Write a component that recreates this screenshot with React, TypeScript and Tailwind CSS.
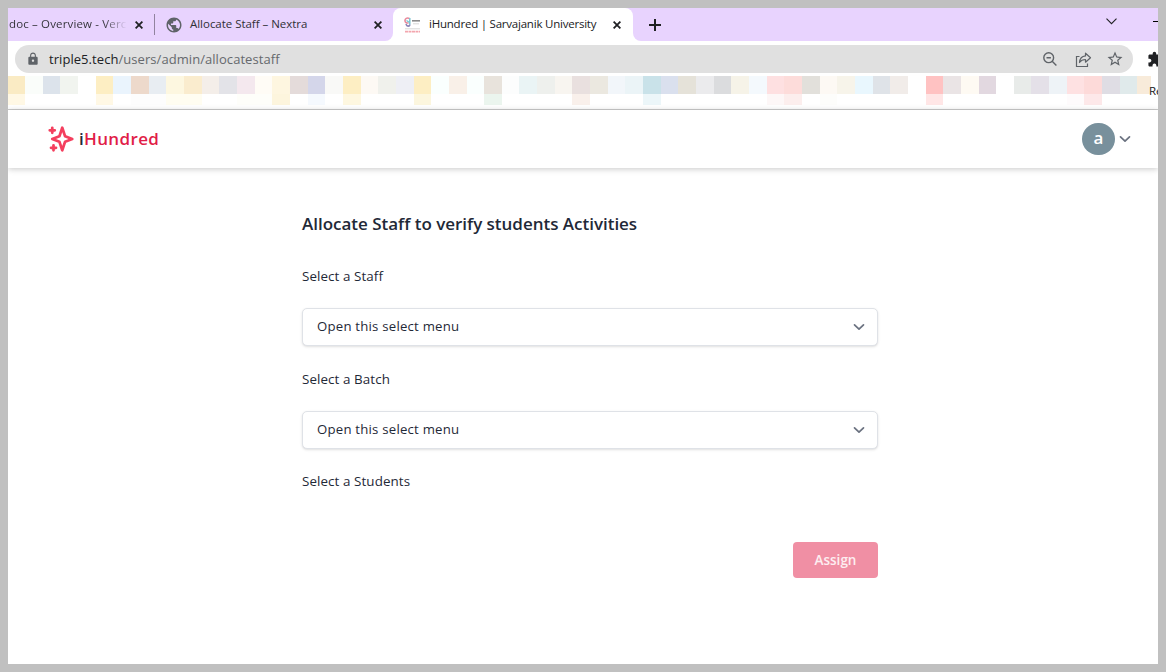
import React from "react";
import { MdLock, MdPublic, MdStarBorder, MdExtension } from "react-icons/md";

// Bookmark tiles: upper colour, optional lower colour
const tiles: [string, string?][] = [
  ["#faebc4", "#fff8e5"], ["#fafdfa"], ["#dce3eb"], ["#f1f4ef"], ["#ffffff"],
  ["#fdeec3", "#fff8e5"], ["#eaf4fd"], ["#edd9cb", "#fdfdfd"], ["#e8edf2", "#fdfdfd"], ["#fdf7e0", "#fffdf1"],
  ["#faecce", "#fffdf1"], ["#f4eee9"], ["#e3e3e8"], ["#f4e8ee", "#fefefa"], ["#fffcf6", "#fefefa"],
  ["#fef6e0", "#fdf5dd"], ["#e4dbda"], ["#d4d6ea", "#f5f9fe"], ["#f9f9f7"], ["#fdeec3", "#fef7e0"],
  ["#fdf9f4"], ["#f0f1ec"], ["#eeeff5"], ["#fdeec3", "#fcf6de"], ["#fafffe"],
  ["#f9f0e8"], ["#fafffe"], ["#e8e3dc", "#ebf5ee"], ["#fcfdfd"], ["#eaf4f5"],
  ["#eef0ed"], ["#f8f5f0"], ["#e9e0df", "#f9f0eb"], ["#ebe8e0"], ["#f2f6fa"],
  ["#ebf4f7"], ["#c9e2e9", "#ecf6f9"], ["#dae0ee"], ["#e5e2d9"], ["#ebebed"],
  ["#dbdcde"], ["#f6f3e8"], ["#f4f9fd"], ["#fee0e1", "#fdf7f7"], ["#fddcda", "#fceeed"],
  ["#e2e0db"], ["#fdf9f4", "#fdfdfb"], ["#f7f4ea"], ["#e9f7fe"], ["#dfe3e8"],
  ["#f1ece9"], ["#ffffff"], ["#ffc2c2", "#ffe6e6"], ["#eae4e5"], ["#fefaf3"],
  ["#e2d8e0"], ["#ffffff"], ["#e8ebe9"], ["#e4e0e8"], ["#eef3f7"],
  ["#fee1e2", "#fefbfc"], ["#fddad9", "#fde8e9"], ["#dfdde4"], ["#e0eaeb"], ["#f8ebda"],
];

const edge = (i: number) => Math.min(Math.floor(i * 17.655), 1143);

function Close() {
  return (
    <svg className="size-2 shrink-0" viewBox="0 0 8 8" fill="none" stroke="#202124" strokeWidth="1.8">
      <path d="M.6.6l6.8 6.8M7.4.6L.6 7.4" />
    </svg>
  );
}

function Chevron({ className }: { className: string }) {
  return (
    <svg className={className} viewBox="0 0 12 8" fill="none" stroke="#6b7280" strokeWidth="1.7" strokeLinecap="round" strokeLinejoin="round">
      <path d="M1.5 1.8L6 6.2l4.500-4.400" />
    </svg>
  );
}

function SiteIcon() {
  return (
    <svg className="h-4 w-[17px] shrink-0" viewBox="0 0 17 16" fill="none">
      <path d="M5.500 1.500C3 .2.800 1.500 1 4c.2 1.800 2 2.400 3.500 1.800" stroke="#e88a9c" strokeWidth="1.600" />
      <path d="M2.500 3.500l3 2M5.800 1v6.500" stroke="#7cc5d2" strokeWidth="1.500" />
      <path d="M2 7c.8 2.800 3.500 2.800 4 .5" stroke="#8b84b8" strokeWidth="1.600" />
      <path d="M8 3.800h8" stroke="#8b8b8b" strokeWidth="1.600" />
      <path d="M9 6.800h6M1 11.800h15" stroke="#d8d8d8" />
      <path d="M1 14.700h15" stroke="#f3a6ae" strokeWidth="1.800" strokeDasharray="3 .5" />
    </svg>
  );
}

function TabStrip() {
  return (
    <div className="flex h-[33px] items-stretch bg-[#e8d3fe] text-[11.500px] text-[#303036]">
      <div className="flex w-[146px] shrink-0 items-center pl-px">
        <div className="w-[118px] overflow-hidden bg-linear-to-r from-[#303036] from-80% to-transparent bg-clip-text pb-px tracking-[0.150px] whitespace-nowrap text-transparent">
          doc – Overview - Verc
        </div>
        <div className="ml-[8px] flex"><Close /></div>
      </div>
      <div className="my-[6px] w-px shrink-0 bg-[#91839f]" />
      <div className="flex w-[238px] shrink-0 bg-white">
        <div className="flex flex-1 items-center rounded-br-lg bg-[#e8d3fe] pl-[10px]">
          <MdPublic className="size-[18px] text-[#5f6368]" />
          <span className="ml-[7px] w-[184px] pb-px whitespace-nowrap tracking-[-0.030px]">Allocate Staff – Nextra</span>
          <Close />
        </div>
      </div>
      <div className="flex w-[240px] shrink-0 items-center rounded-t-lg bg-white pl-[11px] text-[#202124]">
        <SiteIcon />
        <span className="ml-2 w-[184px] pb-px whitespace-nowrap tracking-[-0.220px]">iHundred | Sarvajanik University</span>
        <Close />
      </div>
      <div className="flex flex-1 bg-white">
        <div className="flex flex-1 items-center rounded-bl-lg bg-[#e8d3fe] pl-[16px]">
          <svg className="size-3" viewBox="0 0 12 12" stroke="#202124" strokeWidth="2"><path d="M6 0v12M0 6h12" /></svg>
          <svg className="mb-[6px] ml-[445px] h-[7px] w-[11px]" viewBox="0 0 11 7" fill="none" stroke="#202124" strokeWidth="1.100"><path d="M.5.7l5 5 5-5" /></svg>
          <div className="mb-[7px] ml-auto h-px w-[5px] bg-black" />
        </div>
      </div>
    </div>
  );
}

function AddressBar() {
  return (
    <div className="flex h-[35px] items-start pt-1 pl-[7px]">
      <div className="flex h-7 w-[1118px] shrink-0 items-center rounded-full bg-[#e0e0e0] pl-[11px] text-[#5f6368]">
        <MdLock className="size-[14px]" />
        <div className="ml-[9px] pt-px text-[13px] whitespace-nowrap tracking-[0.060px] text-[#66696d]">
          <span className="text-[#202124]">triple5.tech</span>/users/admin/allocatestaff
        </div>
        <div className="mr-[9px] ml-auto flex items-center">
          <svg className="mr-[18px] size-[14px]" viewBox="0 0 14 14" fill="none" stroke="#5f6368" strokeWidth="1.400">
            <circle cx="5.700" cy="5.700" r="4.900" />
            <path d="M9.200 9.200l4.200 4.200M3.500 5.700h4.400" />
          </svg>
          <svg className="mr-[14px] size-[17px]" viewBox="0 0 17 17" fill="none" stroke="#5f6368" strokeWidth="1.200">
            <path d="M4.500 5.500H1.500v10h11V12.500" />
            <path d="M10.500 2.200l5 4.500-5 4.500V8.500c-2.800 0-4.700 1-6 3 .3-3.800 2.300-6.200 6-6.600z" strokeLinejoin="round" />
          </svg>
          <MdStarBorder className="size-[18px]" />
        </div>
      </div>
      <MdExtension className="mt-[6px] ml-[14px] size-[17px] shrink-0 text-[#202124]" />
    </div>
  );
}

function BookmarkBar() {
  return (
    <div className="flex h-[34px] items-start overflow-hidden border-b border-[#cccccc]">
      {tiles.map(([upper, lower], i) => (
        <div key={i} className="shrink-0" style={{ width: edge(i + 1) - edge(i) }}>
          <div className="h-[18px]" style={{ background: upper }} />
          <div className="h-[11px]" style={{ background: lower ?? "#ffffff" }} />
        </div>
      ))}
      <span className="-ml-[2px] mt-[6px] text-[11.500px] leading-[17px] text-[#202124]">Re</span>
    </div>
  );
}

function SelectBox() {
  return (
    <button className="flex h-[38px] w-full items-center justify-between rounded-[5px] border border-[#dfe2e7] bg-white pr-[12px] pl-[14px] text-left shadow-sm">
      <span className="text-[13.200px] tracking-[0.220px]">Open this select menu</span>
      <Chevron className="h-2 w-3" />
    </button>
  );
}

export default function App() {
  return (
    <div className="h-[672px] w-[1166px] overflow-hidden bg-[#c0c0c0] p-2 font-['Open_Sans','Noto_Sans',sans-serif]">
      <div className="flex h-full flex-col overflow-hidden bg-white">
        <TabStrip />
        <AddressBar />
        <BookmarkBar />
        <header className="flex h-[58px] shrink-0 items-center bg-white pr-[27px] pb-px pl-[38px] shadow-[0_1px_6px_rgba(0,0,0,0.22)]">
          <svg className="size-[30px]" viewBox="0 0 24 24" fill="none" stroke="#f43f5e" strokeWidth="2.200" strokeLinecap="round" strokeLinejoin="round">
            <path d="M5 3v4M3 5h4M6 17v4m-2-2h4m5-16l2.286 6.857L21 12l-5.714 2.143L13 21l-2.286-6.857L5 12l5.714-2.143L13 3z" />
          </svg>
          <span className="ml-[3px] text-[17px] font-semibold tracking-[0.350px] text-[#e11d48]">
            <span className="text-[#1f2937]">i</span>Hundred
          </span>
          <div className="ml-auto flex h-8 w-[33px] items-center justify-center rounded-full bg-[#78909c] pb-[2px] text-[17px] font-semibold text-white">a</div>
          <Chevron className="ml-1 h-2 w-3" />
        </header>
        <main className="ml-[294px] w-[576px] text-[13.400px] text-[#1f2937]">
          <h1 className="mt-[42px] text-[17px] leading-7 font-semibold tracking-[-0.020px] whitespace-nowrap">Allocate Staff to verify students Activities</h1>
          <p className="mt-[28px] leading-5 tracking-[0.080px]">Select a Staff</p>
          <div className="mt-[22px] h-[39px]"><SelectBox /></div>
          <p className="mt-[22px] leading-5 tracking-[0.080px]">Select a Batch</p>
          <div className="mt-[22px] h-[39px]"><SelectBox /></div>
          <p className="mt-[21px] leading-5 tracking-[0.080px]">Select a Students</p>
          <div className="mt-[51px] flex justify-end">
            <button className="h-9 w-[85px] rounded bg-[#f08fa4] text-[13.500px] font-semibold text-white/85">Assign</button>
          </div>
        </main>
      </div>
    </div>
  );
}
